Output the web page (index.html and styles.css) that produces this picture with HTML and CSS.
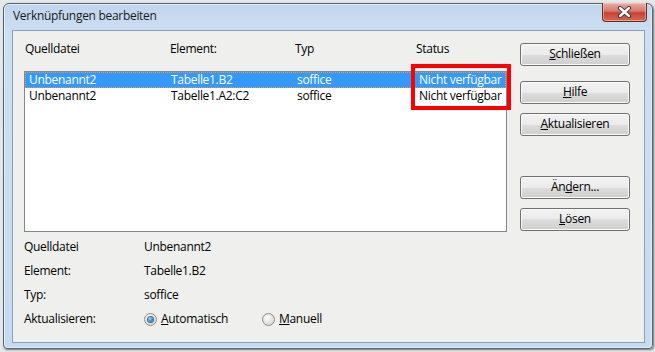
FILE: index.html
```html
<!DOCTYPE html>
<html lang="de">
<head>
  <meta charset="UTF-8">
  <title>Verknüpfungen bearbeiten</title>
  <link rel="stylesheet" href="styles.css">
</head>
<body>
  <div class="window">
    <div class="titlebar">
      <span class="title">Verknüpfungen bearbeiten</span>
      <div class="close">
        <svg width="15" height="12" viewBox="0 0 15 12">
          <path d="M3 2 L12 10 M12 2 L3 10" stroke="#3a2a2a" stroke-width="4.2" stroke-linecap="round"/>
          <path d="M3 2 L12 10 M12 2 L3 10" stroke="#ffffff" stroke-width="2.4" stroke-linecap="round"/>
        </svg>
      </div>
    </div>

    <div class="client">
      <div class="top">
        <div class="links">
          <div class="head">
            <span>Quelldatei</span><span>Element:</span><span>Typ</span><span>Status</span>
          </div>
          <div class="listbox">
            <div class="row selected">
              <span>Unbenannt2</span><span>Tabelle1.B2</span><span>soffice</span><span>Nicht verfügbar</span>
            </div>
            <div class="row">
              <span>Unbenannt2</span><span>Tabelle1.A2:C2</span><span>soffice</span><span>Nicht verfügbar</span>
            </div>
          </div>
          <div class="mark"></div>
        </div>

        <div class="buttons">
          <div class="btn"><u>S</u>chließen</div>
          <div class="btn gap-l"><u>H</u>ilfe</div>
          <div class="btn gap-s"><u>A</u>ktualisieren</div>
          <div class="btn gap-xl">Än<u>d</u>ern...</div>
          <div class="btn gap-s"><u>L</u>ösen</div>
        </div>
      </div>

      <div class="info">
        <span>Quelldatei</span><span>Unbenannt2</span>
        <span>Element:</span><span>Tabelle1.B2</span>
        <span>Typ:</span><span>soffice</span>
        <span>Aktualisieren:</span>
        <div class="options">
          <label class="option first"><span class="radio checked"></span><span><u>A</u>utomatisch</span></label>
          <label class="option"><span class="radio"></span><span><u>M</u>anuell</span></label>
        </div>
      </div>
    </div>
  </div>
</body>
</html>
```

FILE: styles.css
```css
body {
  margin: 0;
  width: 655px;
  height: 352px;
  overflow: hidden;
  background: #e6e7e8;
  font-family: "Open Sans", "Noto Sans", sans-serif;
  font-size: 12px;
  letter-spacing: -0.3px;
  color: #000;
}

.window {
  box-sizing: border-box;
  width: 650px;
  height: 346px;
  margin: 3px 0 0 3px;
  padding: 0 7px 5px 8px;
  border: 1px solid #59636f;
  border-radius: 6px 6px 4px 4px;
  background: linear-gradient(#c0d5ee, #cddff3 30px, #c6daf1);
  box-shadow: 1px 1px 2px rgba(0, 0, 0, 0.5), inset 0 0 0 1px #e4eefa;
  display: flex;
  flex-direction: column;
}

.titlebar {
  height: 26px;
  display: flex;
  align-items: flex-start;
  justify-content: space-between;
}

.title {
  padding: 4px 0 0 1px;
  line-height: 16px;
  color: #1a1a1a;
}

.close {
  width: 43px;
  height: 18px;
  margin: -1px -2px 0 0;
  border: 1px solid #5e3029;
  border-top: none;
  border-radius: 0 0 4px 4px;
  background: linear-gradient(#e9b0a5, #d6776a 45%, #c8402e 55%, #d66a52);
  box-shadow: inset 0 0 0 1px rgba(255, 220, 210, 0.45);
  display: flex;
  align-items: center;
  justify-content: center;
}

.client {
  flex: 1;
  border: 1px solid #8d9fb7;
  background: #eff0ee;
}

.top {
  display: flex;
  padding-left: 11px;
}

.links {
  position: relative;
  width: 483px;
}

.head,
.row {
  display: grid;
  white-space: nowrap;
}

.head {
  height: 40px;
  box-sizing: border-box;
  padding: 10px 0 0 1px;
  line-height: 16px;
  grid-template-columns: 145px 125px 121px auto;
}

.listbox {
  box-sizing: border-box;
  height: 161px;
  border: 1px solid #828790;
  background: #fff;
}

.row {
  height: 15px;
  line-height: 15px;
  padding-left: 3px;
  grid-template-columns: 142px 126px 122px auto;
  border: 0 solid transparent;
  border-width: 0 1px;
}

.row.selected {
  background: #3399ff;
  color: #fff;
  border: 1px dotted #e39a3c;
  height: 14px;
  line-height: 13px;
}

.mark {
  position: absolute;
  left: 387px;
  top: 33px;
  width: 92px;
  height: 38px;
  border: 4px solid #ff0000;
}

.buttons {
  display: flex;
  flex-direction: column;
  padding: 12px 0 0 13px;
}

.btn {
  box-sizing: border-box;
  width: 110px;
  height: 23px;
  border: 1px solid #707070;
  border-radius: 3px;
  background: linear-gradient(#f2f2f2, #ebebeb 50%, #dddddd 50%, #cfcfcf);
  box-shadow: inset 0 0 0 1px #fbfbfb;
  text-align: center;
  line-height: 20px;
}

.gap-l {
  margin-top: 15px;
}

.gap-s {
  margin-top: 9px;
}

.gap-xl {
  margin-top: 40px;
}

.info {
  display: grid;
  grid-template-columns: 120px auto;
  grid-auto-rows: 24px;
  align-items: center;
  padding: 3px 0 0 11px;
  line-height: 16px;
}

.options {
  display: flex;
  align-items: center;
}

.option {
  display: flex;
  align-items: center;
  gap: 4px;
}

.option.first {
  width: 118px;
}

.radio {
  box-sizing: border-box;
  width: 13px;
  height: 13px;
  border-radius: 50%;
  border: 1px solid #8a8b8c;
  background: radial-gradient(circle at 40% 35%, #ffffff, #e6e6e6 45%, #cfcfcf);
  display: flex;
  align-items: center;
  justify-content: center;
}

.radio.checked::after {
  content: "";
  width: 5px;
  height: 5px;
  border-radius: 50%;
  background: radial-gradient(circle at 40% 35%, #9fd3f7, #2f86c9 60%, #17588f);
  box-shadow: 0 0 0 1px #3b6d99;
}
```
